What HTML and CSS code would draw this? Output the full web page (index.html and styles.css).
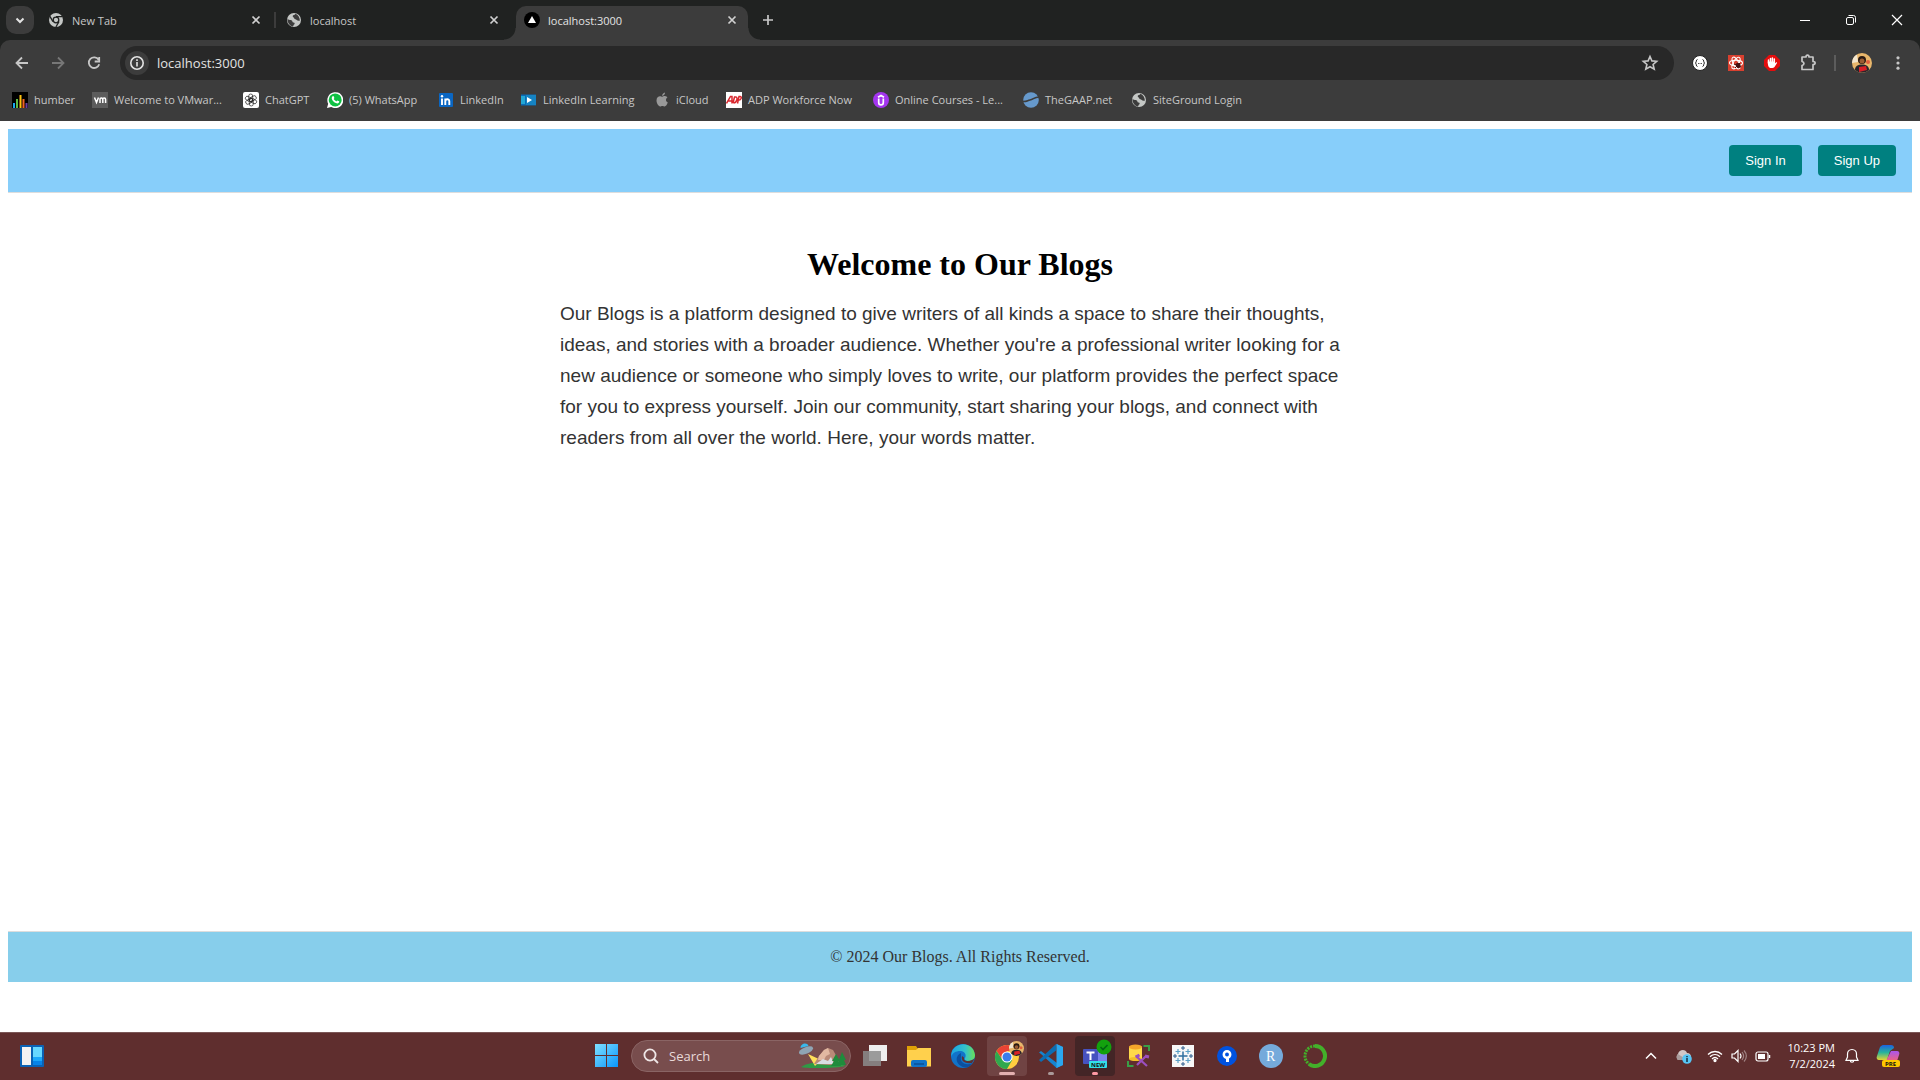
FILE: index.html
```html
<!DOCTYPE html>
<html lang="en">
<head>
<meta charset="utf-8">
<title>localhost:3000</title>
<link rel="stylesheet" href="styles.css">
</head>
<body>
<svg class="defs" aria-hidden="true">
  <symbol id="x" viewBox="0 0 16 16"><path d="M4.500 4.500l7 7M11.500 4.500l-7 7" stroke="currentColor" stroke-width="1.700" fill="none"/></symbol>
  <symbol id="globe" viewBox="0 0 16 16"><circle cx="8" cy="8" r="7" fill="#c4c7c5"/><path d="M1.500 7c2 1.500 3.200.6 4.300 1.400 1 .8.200 1.800 1.700 2 1.600.2 1.500 1.600.3 2.400l-.8 1.700C4 14 1.300 11 1.500 7zM9.500 1.800c-.2 1.500-2.700 1-2.800 2.300-.1 1.300 1.300 1.300 1.600 2.300.3 1.100 1.700.6 2.400 1.500.5.700 1.900 1 3.200.6-.2-3-1.900-5.700-4.400-6.700z" fill="#3c3c3c"/></symbol>
  <symbol id="face" viewBox="0 0 20 20"><circle cx="10" cy="10" r="10" fill="#e8b66b"/><path d="M0 10a10 10 0 0 1 5-8.600L6 9z" fill="#f3e6cf"/><circle cx="10" cy="7" r="4" fill="#2a1a12"/><circle cx="10" cy="8" r="2.500" fill="#9a5c33"/><path d="M3 17c0-4 3-5.500 7-5.500s7 1.500 7 5.500a10 10 0 0 1-14 0z" fill="#28262c"/><path d="M7 14l7-1 1 4-8 2z" fill="#d81f26"/><circle cx="16" cy="9" r="2" fill="#e2603c"/></symbol>
</svg>
<div class="desktop">
  <div class="browser">
    <div class="tabstrip">
      <button class="tab-search" aria-label="Search tabs"><svg width="16" height="16"><path d="M4.500 6.500L8 10l3.500-3.500" stroke="#e3e3e3" stroke-width="2" fill="none"/></svg></button>
      <div class="tabs">
        <div class="tab divided">
          <svg width="16" height="16" viewBox="0 0 16 16"><circle cx="8" cy="8" r="7" fill="#c4c7c5"/><circle cx="8" cy="8" r="2.800" fill="#c4c7c5" stroke="#202221" stroke-width="1.300"/><path d="M8 4.600h6.300M5 9.700L1.900 4.400M11 9.700L7.900 15" stroke="#202221" stroke-width="1.300"/></svg>
          <span class="tab-title">New Tab</span>
          <button class="tab-close" aria-label="Close tab"><svg width="16" height="16"><use href="#x"/></svg></button>
        </div>
        <div class="tab">
          <svg width="16" height="16"><use href="#globe"/></svg>
          <span class="tab-title">localhost</span>
          <button class="tab-close" aria-label="Close tab"><svg width="16" height="16"><use href="#x"/></svg></button>
        </div>
        <div class="tab active">
          <svg width="16" height="16"><circle cx="8" cy="8" r="8"/><path d="M8 4l4 7H4z" fill="#fff"/></svg>
          <span class="tab-title">localhost:3000</span>
          <button class="tab-close" aria-label="Close tab"><svg width="16" height="16"><use href="#x"/></svg></button>
        </div>
      </div>
      <button class="new-tab" aria-label="New tab"><svg width="16" height="16"><path d="M8 3v10M3 8h10" stroke="#c7c7c7" stroke-width="1.700"/></svg></button>
      <div class="window-controls">
        <button aria-label="Minimize"><svg width="12" height="12"><path d="M1 6.500h10" stroke="#fff"/></svg></button>
        <button aria-label="Restore"><svg width="12" height="12" fill="none" stroke="#fff"><rect x="1.500" y="3.500" width="7" height="7" rx="1.500"/><path d="M3.500 1.500h5a2 2 0 0 1 2 2v5"/></svg></button>
        <button aria-label="Close"><svg width="12" height="12"><path d="M1 1l10 10M11 1L1 11" stroke="#fff" stroke-width="1.200"/></svg></button>
      </div>
    </div>
    <div class="chrome-bars">
      <div class="toolbar">
        <button class="tool" aria-label="Back"><svg width="16" height="16" fill="none" stroke="#c7c7c7" stroke-width="1.800"><path d="M14 8H3M8 2.500L2.500 8 8 13.500"/></svg></button>
        <button class="tool" aria-label="Forward"><svg width="16" height="16" fill="none" stroke="#777" stroke-width="1.800"><path d="M2 8h11M8 2.500L13.500 8 8 13.500"/></svg></button>
        <button class="tool" aria-label="Reload"><svg width="16" height="16" fill="none" stroke="#c7c7c7" stroke-width="1.800"><path d="M12.600 4.800A5.300 5.300 0 1 0 13.200 9.200M13.200 2v4.500H8.700"/></svg></button>
        <div class="omnibox">
          <button class="site-info" aria-label="View site information"><svg width="16" height="16"><circle cx="8" cy="8" r="6.200" fill="none" stroke="#e3e3e3" stroke-width="1.600"/><path d="M8 7v4.500M8 4.300v1.600" stroke="#e3e3e3" stroke-width="1.600"/></svg></button>
          <input class="address" type="text" aria-label="Address" value="localhost:3000">
          <button class="star" aria-label="Bookmark this tab"><svg width="18" height="18"><path d="M9 2.500l1.900 4.400 4.800.4-3.600 3.200 1.100 4.700L9 12.700l-4.200 2.500 1.100-4.700-3.600-3.200 4.800-.4z" fill="none" stroke="#c7c7c7" stroke-width="1.600"/></svg></button>
        </div>
        <button class="tool" aria-label="JSON extension"><svg width="16" height="16"><circle cx="8" cy="8" r="7.500" fill="#fff" stroke="#222"/><path d="M5.500 4.500C3.500 4.500 5 8 3.300 8 5 8 3.500 11.500 5.500 11.500M10.500 4.500c2 0 .5 3.500 2.200 3.500-1.700 0-.2 3.500-2.200 3.500" fill="none" stroke="#222"/><path d="M6 8.500h4" stroke="#555" stroke-dasharray="1 .5"/></svg></button>
        <button class="tool" aria-label="React developer tools"><svg width="16" height="16"><path fill="#d9402f" d="M0 0h16v16H0z"/><g fill="none" stroke="#fff" stroke-width="1.100"><ellipse cx="8" cy="8" rx="6.500" ry="2.700"/><ellipse cx="8" cy="8" rx="6.500" ry="2.700" transform="rotate(60 8 8)"/><ellipse cx="8" cy="8" rx="6.500" ry="2.700" transform="rotate(120 8 8)"/></g><ellipse cx="10" cy="10.500" rx="2.200" ry="2.800" fill="#411" transform="rotate(-30 10 10)"/><path d="M6 9l7 3M7 13l5-5" stroke="#411"/></svg></button>
        <button class="tool" aria-label="Ad blocker"><svg width="16" height="16"><path d="M5 0h6l5 5v6l-5 5H5l-5-5V5z" fill="#e40d0d"/><path d="M4.500 8V5M6.500 7V3.500M8.400 7V3M10.300 7.500V4" stroke="#fff" stroke-width="1.500" stroke-linecap="round"/><path d="M3.800 6.500h7.300v1.800l1.300-1c.7-.2.9.3.5.9L10.500 12c-1 1.300-4.300 1.500-5.500.2-1-1-1.200-3-1.200-5.700z" fill="#fff"/></svg></button>
        <button class="tool" aria-label="Extensions"><svg width="18" height="18"><path d="M3 3h4c0-2.400 3-2.400 3 0h4v4.500c2.800 0 2.800 3 0 3V15.500H3v-4c2.600-.7 2.600-3.300 0-4z" fill="none" stroke="#c7c7c7" stroke-width="1.700" stroke-linejoin="round"/></svg></button>
        <span class="tool-divider"></span>
        <button class="tool" aria-label="Profile"><svg width="20" height="20"><use href="#face"/></svg></button>
        <button class="tool" aria-label="Menu"><svg width="16" height="16" fill="#c7c7c7"><circle cx="8" cy="2.800" r="1.600"/><circle cx="8" cy="8" r="1.600"/><circle cx="8" cy="13.200" r="1.600"/></svg></button>
      </div>
      <nav class="bookmarks" aria-label="Bookmarks">
        <a href="#"><svg width="16" height="16"><path d="M0 0h16v16H0z"/><path d="M2 16v-5" stroke="#19a7f0" stroke-width="2"/><path d="M5 16V7" stroke="#5fbb46" stroke-width="2"/><path d="M8.500 16V3" stroke="#ffc20e" stroke-width="2"/><path d="M11.500 16V7" stroke="#f26522" stroke-width="2"/><path d="M14.500 16v-5" stroke="#6a3fa0" stroke-width="2"/></svg>humber</a>
        <a href="#"><svg width="16" height="16"><path d="M0 0h16v16H0z" fill="#5c5c5c"/><path d="M2.500 5.500l2 5 2-5M8 11V7.500c0-2.200 2.800-2 2.800 0V11 7.500c0-2.200 2.800-2 2.800 0V11" fill="none" stroke="#fff" stroke-width="1.500"/></svg>Welcome to VMwar...</a>
        <a href="#"><svg width="16" height="16"><rect width="16" height="16" rx="2" fill="#fff"/><g fill="none" stroke="#222" stroke-width=".7"><rect x="5.700" y="2" width="4" height="7.500" rx="2"/><rect x="5.700" y="2" width="4" height="7.500" rx="2" transform="rotate(60 8 8)"/><rect x="5.700" y="2" width="4" height="7.500" rx="2" transform="rotate(120 8 8)"/><rect x="5.700" y="2" width="4" height="7.500" rx="2" transform="rotate(180 8 8)"/><rect x="5.700" y="2" width="4" height="7.500" rx="2" transform="rotate(240 8 8)"/><rect x="5.700" y="2" width="4" height="7.500" rx="2" transform="rotate(300 8 8)"/></g></svg>ChatGPT</a>
        <a href="#"><svg width="16" height="16"><path d="M0 16l1.200-4.200A8 8 0 1 1 4.200 15z" fill="#fff"/><circle cx="8.200" cy="7.900" r="6.500" fill="#0fc143"/><path d="M5.500 4.200l1-.1.900 2-.7 1c.7 1.200 1.400 1.700 2.600 2.300l.9-1 2 .9c.2 1.400-1 2.200-2.100 2.100C7.400 11 5 8.500 4.700 6.300c0-.9.300-1.600.8-2.100z" fill="#fff"/></svg>(5) WhatsApp</a>
        <a href="#"><svg width="16" height="16"><rect x="1" y="1" width="14" height="14" rx="1" fill="#0a66c2"/><path d="M4 6.500V13M7.300 13V6.500M7.300 9.200c0-2.400 4-2.800 4 0V13" fill="none" stroke="#fff" stroke-width="1.900"/><circle cx="4" cy="4.200" r="1.200" fill="#fff"/></svg>LinkedIn</a>
        <a href="#"><svg width="16" height="16"><path d="M0 2.500h15v11H0z" fill="#0a6bb5"/><path d="M0 4h4v8H0z" fill="#23a7d5"/><path d="M5 3h10v10H5z" fill="#1583c3"/><path d="M6 5l5 3-5 3z" fill="#fff"/></svg>LinkedIn Learning</a>
        <a href="#"><svg width="16" height="16" fill="#999"><path d="M11 .5c.1 1.800-1.200 3.400-2.800 3.400C8 2.300 9.400.7 11 .5zM8.300 4.800c.7 0 1.400-.8 2.700-.7 1 .1 1.900.5 2.400 1.300-2.100 1.300-1.700 4.200.4 5-.6 1.700-1.900 4-3.200 4-.8 0-1.200-.5-2.200-.5s-1.400.5-2.200.5C4.500 14.400 2.500 11 2.500 8.500c0-3 1.900-4.300 3.500-4.300 1 0 1.700.6 2.300.6z"/></svg>iCloud</a>
        <a href="#"><svg width="16" height="16"><path d="M0 0h16v16H0z" fill="#fff"/><path d="M.5 11.500l4-7H6v7M2.500 9H6M7 11l1.500-6h1.500c2 0 1 6-2.500 6M11.500 11.500l1.500-7h1.200c1.800 0 1.300 3.800-1.700 3.800" fill="none" stroke="#d9272e" stroke-width="1.500"/></svg>ADP Workforce Now</a>
        <a href="#"><svg width="16" height="16"><circle cx="8" cy="8" r="8" fill="#a435f0"/><path d="M5 5.300l3-1.800 3 1.800M5.700 6.500v4c0 3.200 4.600 3.200 4.600 0v-4" fill="none" stroke="#fff" stroke-width="1.700"/></svg>Online Courses - Le...</a>
        <a href="#"><svg width="16" height="16"><circle cx="8" cy="8" r="7.800" fill="#6699cc"/><path d="M0 9.500c5 0 4-1 7-1.500 3.500-.6 4-3 9-3" stroke="#3c3c3c" stroke-width="1.600" fill="none"/></svg>TheGAAP.net</a>
        <a href="#"><svg width="16" height="16"><use href="#globe"/></svg>SiteGround Login</a>
      </nav>
    </div>
    <div class="page">
      <header class="site-header">
        <button class="auth">Sign In</button>
        <button class="auth">Sign Up</button>
      </header>
      <main class="content">
        <h1>Welcome to Our Blogs</h1>
        <p>Our Blogs is a platform designed to give writers of all kinds a space to share their thoughts, ideas, and stories with a broader audience. Whether you're a professional writer looking for a new audience or someone who simply loves to write, our platform provides the perfect space for you to express yourself. Join our community, start sharing your blogs, and connect with readers from all over the world. Here, your words matter.</p>
      </main>
      <footer class="site-footer">© 2024 Our Blogs. All Rights Reserved.</footer>
    </div>
  </div>
  <div class="taskbar">
    <div class="widgets">
      <button class="task" aria-label="Widgets"><svg width="24" height="22"><rect width="24" height="22" rx="1" fill="#0a62b5"/><path d="M2 2h9v18H2z" fill="#f2f2f2"/><path d="M13 2h9v10h-9z" fill="#67d8ff"/><path d="M13 12h9v4h-9z" fill="#1ba8fb"/><path d="M13 16h9v4h-9z" fill="#0683e8"/></svg></button>
    </div>
    <div class="apps">
      <button class="task" aria-label="Start"><svg width="24" height="24"><defs><linearGradient id="win" x1="0" y1="0" x2="1" y2="1"><stop stop-color="#7fe0ff"/><stop offset="1" stop-color="#0a95fb"/></linearGradient></defs><path d="M0 0h11v11H0zM12 0h11v11H12zM0 12h11v11H0zM12 12h11v11H12z" fill="url(#win)"/></svg></button>
      <label class="search">
        <svg width="16" height="16" fill="none" stroke="#efe6e6" stroke-width="1.800"><circle cx="7" cy="7" r="5.600"/><path d="M11 11l4 4"/></svg>
        <input type="text" placeholder="Search" aria-label="Search">
        <svg width="48" height="26" viewBox="0 0 48 26"><path d="M3 24c8-6 34-7 44-1-4 2-38 3-44 1z" fill="#2f9a45"/><path d="M10 11l7 12 6-6z" fill="#ffe05a"/><path d="M16 21l5-8 5-6 4-2 5 2 8 14-12 1z" fill="#b98a78"/><path d="M21 13l5-6 4-2 2 6-4 2-2 4-6 0z" fill="#e2b9a2"/><path d="M18 21l7-5 5 2 3-4 3 7z" fill="#dadde2"/><path d="M38 11l4 7h-2l3 5H33l3-5h-2zM44 9l4 8h-2l2 5h-9z" fill="#1f8b3c"/><ellipse cx="8" cy="7.500" rx="7.500" ry="3.300" fill="#8fa5b5" transform="rotate(-22 8 7.500)"/><path d="M2.500 5c0-5 7-6 8-2z" fill="#39b9ec"/></svg>
      </label>
      <button class="task" aria-label="Task view"><svg width="24" height="24"><rect x="6" y="1" width="18" height="16" fill="#eee"/><rect x="0" y="7" width="18" height="15" fill="#8c8c8c" opacity=".85"/></svg></button>
      <button class="task" aria-label="File Explorer"><svg width="24" height="24"><path d="M0 2h9l2 3h12v8H0z" fill="#e0a106"/><path d="M0 6h9l2-2h13v18.500H0z" fill="#ffd04c"/><rect x="4" y="16" width="16" height="7" rx="2" fill="#1173c8"/><path d="M7 20h10" stroke="#0b4f97" stroke-width="1.500"/></svg></button>
      <button class="task" aria-label="Edge"><svg width="24" height="24"><defs><linearGradient id="edge"><stop stop-color="#1ba5e4"/><stop offset=".6" stop-color="#35c3c9"/><stop offset="1" stop-color="#6bdf55"/></linearGradient></defs><circle cx="12" cy="12" r="12" fill="#1173c9"/><path d="M.3 10C2-2 22-4 24 11c0 4-3 6-7 6-3 0-4-1-3-3 2-4-1-7-5-7-4 0-8 2-8.700 6z" fill="url(#edge)"/><path d="M10 9c-8 4-4 14 5 14.500 3-.3 5-2 6.500-4.500-6 3-13 0-11.500-6z" fill="#0c4f9f"/><path d="M11 12c-1 4 1 8 10 7l3-5c-2 3-12 5-11-.5z" fill="#5c3133"/></svg></button>
      <button class="task open focused" aria-label="Chrome"><svg class="badged" width="30" height="30" viewBox="-2 1 30 30"><circle cx="13" cy="17" r="12" fill="#ffcd40"/><path d="M2.600 11A12 12 0 0 1 23.400 11H13L8 19z" fill="#ea4335"/><path d="M2.600 11A12 12 0 0 0 13 29l5.200-9-10-.500z" fill="#2fa84f"/><circle cx="13" cy="17" r="5.600" fill="#fff"/><circle cx="13" cy="17" r="4.500" fill="#3b7ded"/><svg x="15" y="1" width="15" height="15" viewBox="0 0 20 20"><use href="#face"/></svg></svg></button>
      <button class="task open" aria-label="Visual Studio Code"><svg width="24" height="24"><path d="M17.500 0L24 3v18l-6.500 3L2 10 0 8.500 2 7l16 12V7" fill="#1684cf"/><path d="M17 6.500L2 18l-2-2L17 0z" fill="#0c6db3"/><path d="M17.500 0L24 3v18l-6.500 3z" fill="#2ba7ef"/></svg></button>
      <button class="task open alert" aria-label="Teams"><svg class="badged" width="30" height="30" viewBox="-2 1 30 30"><rect x="16" y="10" width="9" height="14" rx="2" fill="#7b83eb"/><rect x="1" y="9" width="15" height="15" rx="1" fill="#4652c0"/><path d="M4.500 12.500h8M8.500 12.500V20" stroke="#fff" stroke-width="2"/><circle cx="22" cy="7" r="7.500" fill="#13a10e"/><path d="M18.500 7l2.500 2.500 4.500-4.500" stroke="#061" stroke-width="1.600" fill="none"/><rect x="7" y="21" width="18" height="7" rx="1" fill="#33e0e8"/><text x="9" y="27" class="icon-new">NEW</text></svg></button>
      <button class="task" aria-label="Database tools"><svg width="24" height="24"><path d="M2 2.500h13V15H2z" fill="#ffd94a"/><ellipse cx="8.500" cy="15" rx="6.500" ry="2" fill="#f3bd2a"/><ellipse cx="8.500" cy="3" rx="6.500" ry="2.500" fill="#f4a62a"/><path d="M16.500 2H22v5M1 17v5h5.500" fill="none" stroke="#39a047" stroke-width="2"/><path d="M10 21l9-9M10 13l10 9" stroke="#9b4fc0" stroke-width="2.200"/><path d="M8.500 13l4-2M18 12l4 1" stroke="#9b4fc0" stroke-width="3"/></svg></button>
      <button class="task" aria-label="Tableau"><svg width="24" height="24"><rect x="1" y="1" width="22" height="22" fill="#f7f7f7"/><path d="M12 7.500v9M7.500 12h9" stroke="#2f6f9f" stroke-width="1.500"/><path d="M12 2v4M10 4h4M12 18v4M10 20h4M2 12h4M4 10v4M18 12h4M20 10v4" stroke="#2c5c8c"/><path d="M7 5v5M4.500 7.500h5M17 5v5M14.500 7.500h5M7 14v5M4.500 16.500h5M17 14v5M14.500 16.500h5" stroke="#5ba0c6" stroke-width="1.200"/></svg></button>
      <button class="task" aria-label="Sourcetree"><svg width="24" height="24"><circle cx="12" cy="12" r="10" fill="#0052e0"/><circle cx="12" cy="10.500" r="3.200" fill="none" stroke="#fff" stroke-width="2.500"/><path d="M12.500 13v5" stroke="#fff" stroke-width="3"/></svg></button>
      <button class="task" aria-label="RStudio"><svg width="24" height="24"><circle cx="12" cy="12" r="12" fill="#75aadb"/><text x="7" y="17" class="icon-r">R</text></svg></button>
      <button class="task" aria-label="Anaconda"><svg width="24" height="24" fill="none" stroke="#43b02a"><path d="M12 2a10 10 0 1 1-6 18" stroke-width="4"/><path d="M12 2a10 10 0 0 0-6 18" stroke-width="3" stroke-dasharray="2 1"/></svg></button>
    </div>
    <div class="tray">
      <div class="tray-overflow">
        <button class="tray-item wide" aria-label="Show hidden icons"><svg width="16" height="16"><path d="M3 10.500l5-5 5 5" stroke="#fff" stroke-width="1.500" fill="none"/></svg></button>
        <button class="tray-item wide" aria-label="OneDrive"><svg width="18" height="16"><path d="M4 12a4 4 0 0 1 0-6c1-5 8-5 9-1 3 0 4 2 4 4v3z" fill="#d1c6c6"/><path d="M4 12a4 4 0 0 1 0-6l9 6z" fill="#a99b9b"/><circle cx="13" cy="11" r="4.800" fill="#56c5f5"/><path d="M13 10v4M13 8v1.200" stroke="#123" stroke-width="1.400"/></svg></button>
      </div>
      <button class="tray-item" aria-label="Wi-Fi"><svg width="16" height="16" fill="none" stroke="#fff" stroke-width="1.300"><path d="M1 6.500c4-4 10-4 14 0M3 8.800c3-2.900 7-2.900 10 0M5 11c2-2 4-2 6 0"/><circle cx="8" cy="12.500" r="1" fill="#fff"/></svg></button>
      <button class="tray-item" aria-label="Volume"><svg width="16" height="16" fill="none" stroke="#fff" stroke-width="1.200"><path d="M1 6h2.500L7 2.500v11L3.500 10H1zM9 5.500c1.200 1.500 1.200 3.500 0 5"/><path d="M11 4c2 2.500 2 5.500 0 8M13 2.500c3 3.500 3 7.500 0 11" opacity=".4"/></svg></button>
      <button class="tray-item" aria-label="Battery"><svg width="16" height="16"><rect x="1" y="4" width="12" height="9" rx="2" fill="none" stroke="#fff" stroke-width="1.200"/><path d="M3 6h7v5H3z" fill="#fff"/><path d="M14.500 7v3" stroke="#fff" stroke-width="1.500"/></svg></button>
      <button class="clock"><span>10:23 PM</span><span>7/2/2024</span></button>
      <button class="tray-item" aria-label="Notifications"><svg width="16" height="16" fill="none" stroke="#fff" stroke-width="1.200"><path d="M8 1.500c-3 0-4.500 2-4.500 4.500v3L2 12.300h12L12.500 9V6C12.500 3.500 11 1.500 8 1.500zM6.300 12.500c0 2.300 3.400 2.300 3.400 0"/></svg></button>
      <button class="copilot" aria-label="Copilot"><svg width="24" height="24"><defs><linearGradient id="cop" x1="0" y1="0" x2="0" y2="1"><stop stop-color="#1b62e0"/><stop offset=".5" stop-color="#27b39c"/><stop offset="1" stop-color="#e4d432"/></linearGradient><linearGradient id="cop2" x1="0" y1="0" x2="0" y2="1"><stop stop-color="#a855f0"/><stop offset="1" stop-color="#f0647a"/></linearGradient></defs><path d="M7 1h8c2 0 3 1 3 3l-4 3-3 9H3c-2 0-3-2-2-4L4 3c1-1 2-2 3-2z" fill="url(#cop)"/><path d="M15 7h6c2 0 3 2 2 4l-2 6H10z" fill="url(#cop2)"/><rect x="6" y="16" width="18" height="7" rx="2" fill="#ffc800"/><text x="9" y="22" class="icon-new">PRE</text></svg></button>
    </div>
  </div>
</div>
</body>
</html>
```
FILE: styles.css
```css
* { box-sizing: border-box; }
body { margin: 0; font-family: "Open Sans", "Noto Sans", sans-serif; font-size: 12px; }
button { border: 0; padding: 0; background: none; color: inherit; font: inherit; }
input { border: 0; padding: 0; outline: 0; background: none; color: inherit; font: inherit; min-width: 0; }
a { color: inherit; text-decoration: none; }
svg { display: block; flex: none; }
.defs { position: absolute; width: 0; height: 0; }

.desktop { min-height: 100vh; display: flex; flex-direction: column; background: #fff; }
.browser { flex: 1; display: flex; flex-direction: column; background: #202221; }

.tabstrip { display: flex; height: 40px; color: #c7c7c7; }
.tab-search { width: 28px; height: 28px; margin: 6px; border-radius: 10px; background: #3c3c3c; display: grid; place-items: center; }
.tabs { display: flex; gap: 6px; padding-top: 6px; }
.tab { position: relative; display: flex; align-items: center; gap: 8px; width: 232px; height: 34px; padding: 0 8px; padding-bottom: 6px; }
.tab-title { flex: 1; font-size: 11px; }
.tab-close { color: #d0d0d0; }
.tab.divided::after { content: ""; position: absolute; right: -4px; top: 6px; width: 2px; height: 16px; background: #3c3c3c; }
.tab.active { background: #3c3c3c; border-radius: 10px 10px 0 0; color: #e3e3e3; }
.tab.active::before, .tab.active::after { content: ""; position: absolute; bottom: 0; width: 12px; height: 12px; }
.tab.active::before { left: -12px; background: radial-gradient(circle at 0 0, transparent 11px, #3c3c3c 12px); }
.tab.active::after { right: -12px; background: radial-gradient(circle at 100% 0, transparent 11px, #3c3c3c 12px); }
.new-tab { width: 28px; height: 28px; margin: 6px; display: grid; place-items: center; }
.window-controls { display: flex; margin-left: auto; }
.window-controls button { width: 46px; display: grid; place-items: center; }

.chrome-bars { background: #3c3c3c; border-radius: 10px 10px 0 0; color: #c7c7c7; }
.toolbar { display: flex; align-items: center; height: 40px; padding: 6px 4px 0; }
.tool { width: 36px; height: 34px; display: grid; place-items: center; }
.tool-divider { width: 2px; height: 16px; margin: 0 8px; background: #5c5c5c; }
.omnibox { flex: 1; display: flex; align-items: center; gap: 8px; height: 34px; margin: 0 8px; padding: 0 15px 0 5px; border-radius: 17px; background: #282828; }
.site-info { width: 24px; height: 24px; border-radius: 12px; background: #3c3c3c; display: grid; place-items: center; }
.address { flex: 1; color: #e3e3e3; font-size: 13px; }
.bookmarks { display: grid; grid-template-columns: 80px 151px 84px 111px 83px 133px 72px 147px 150px 108px 1fr; align-items: center; height: 41px; padding: 0 12px 2px; font-size: 11px; white-space: nowrap; }
.bookmarks a { display: flex; align-items: center; gap: 6px; }

.page { flex: 1; display: flex; flex-direction: column; padding: 8px 8px 50px; background: #fff; }
.site-header { display: flex; justify-content: flex-end; gap: 16px; padding: 16px; background: #87cefa; border-bottom: 1px solid #ddd; }
.auth { height: 31px; padding: 0 16px; border-radius: 4px; background: #008080; color: #fff; font: 500 13px "Liberation Sans", sans-serif; }
.content { flex: 1; width: 100%; max-width: 840px; margin: 0 auto; padding: 53px 20px 20px; }
.content h1 { margin: 0 0 16px; font: bold 32px/36px "Liberation Serif", serif; text-align: center; }
.content p { margin: 0; font: 19px/31px "Liberation Sans", sans-serif; color: #333; }
.site-footer { padding: 16px; border-top: 1px solid #ddd; background: #87ceeb; color: #333; font: 16px/18px "Liberation Serif", serif; text-align: center; }

.taskbar { display: grid; grid-template-columns: 1fr auto 1fr; align-items: center; height: 48px; padding-bottom: 2px; background: #5f2e2e; border-top: 1px solid #7b5656; color: #fff; }
.widgets { padding-left: 10px; }
.apps { display: flex; align-items: center; padding-left: 2px; }
.task { position: relative; width: 44px; height: 40px; display: grid; place-items: center; }
.task.focused, .task.alert { width: 40px; margin: 0 2px; border-radius: 4px; }
.task.focused { background: #704343; }
.task.alert { background: #432526; }
.task.open::after { content: ""; position: absolute; bottom: 1px; left: calc(50% - 3px); width: 6px; height: 3px; border-radius: 2px; background: #a99; }
.task.focused::after { left: calc(50% - 8px); width: 16px; background: #e3b0b0; }
.task.alert::after { background: #ff99a4; }
.badged { overflow: visible; }
.search { display: flex; align-items: center; gap: 10px; width: 220px; height: 32px; margin: 0 2px; padding: 0 4px 0 11px; border: 1px solid #8a6464; border-radius: 16px; background: #784d4d; }
.search input { flex: 1; font-size: 13px; }
.search input::placeholder { color: #e8dada; opacity: 1; }
.icon-new { font: bold 6px "Open Sans", sans-serif; fill: #111; }
.icon-r { font: 14px "Liberation Serif", serif; fill: #fff; }
.tray { display: flex; align-items: center; justify-content: flex-end; padding-right: 8px; }
.tray-overflow { display: flex; margin-right: 4px; }
.tray-item { width: 24px; height: 40px; display: grid; place-items: center; }
.tray-item.wide { width: 32px; }
.clock { display: flex; flex-direction: column; align-items: flex-end; width: 60px; margin-right: 5px; font-size: 11px; line-height: 16px; white-space: nowrap; }
.copilot { width: 48px; height: 40px; display: grid; place-items: center; }
```
